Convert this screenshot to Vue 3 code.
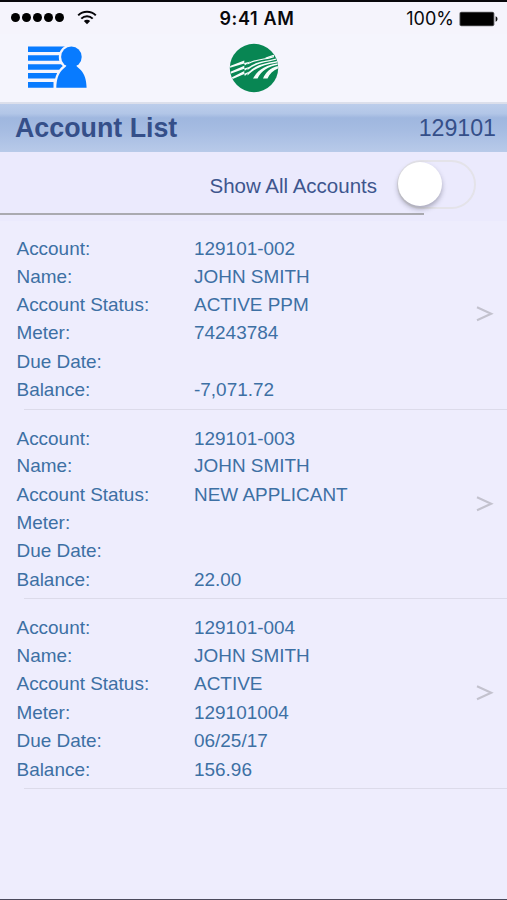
<script setup>
const labels = ['Account:', 'Name:', 'Account Status:', 'Meter:', 'Due Date:', 'Balance:']
const accounts = [
  ['129101-002', 'JOHN SMITH', 'ACTIVE PPM', '74243784', '', '-7,071.72'],
  ['129101-003', 'JOHN SMITH', 'NEW APPLICANT', '', '', '22.00'],
  ['129101-004', 'JOHN SMITH', 'ACTIVE', '129101004', '06/25/17', '156.96'],
]
</script>

<template>
  <div class="screen">
    <header class="status">
      <div class="signal">
        <i v-for="n in 5" :key="n" class="dot"></i>
        <svg class="wifi" width="20" height="15" viewBox="0 0 20 15" fill="none" stroke="#050508" stroke-width="2">
          <path d="M1.2 5.400C6 .6 14 .6 18.800 5.400M4.300 8.600c3.200-3.200 8.200-3.200 11.400 0" />
          <path d="M6.800 11.100c1.800-1.700 4.600-1.700 6.400 0L10 14.300z" fill="#050508" stroke="none" />
        </svg>
      </div>
      <div class="time">9:41 AM</div>
      <div class="power">
        <span>100%</span>
        <svg width="39" height="16" viewBox="0 0 39 16">
          <rect x=".4" y=".7" width="35" height="14.600" rx="2" fill="#68686c" />
          <rect x="1.300" y="1.600" width="33.200" height="12.800" rx="1" fill="#000" />
          <path d="M36.600 5.300c2.500.7 2.500 4.700 0 5.400z" fill="#111" />
        </svg>
      </div>
    </header>

    <nav class="nav">
      <svg class="accounts-icon" width="61" height="45" viewBox="0 0 61 45">
        <g fill="#087bff">
          <path d="M1 1.400h38v5.500H1zM1 10.300h32v5.500H1zM1 19.200h37v5.500H1zM1 28.100h31v5.500H1zM1 37h25.500v5.800H1z" />
          <g stroke="#f6f6fd" stroke-width="4.600">
            <path d="M29.300 42.800c.2-8 2-13.500 5.300-17.300 2-2.300 4-3.500 5.500-5.500h8.600c1.500 2 3.500 3.200 5.500 5.500 3.300 3.800 5.200 9.300 5.400 17.300z" />
            <circle cx="44.400" cy="11.900" r="10.300" />
          </g>
          <path d="M29.300 42.800c.2-8 2-13.500 5.300-17.300 2-2.300 4-3.500 5.500-5.500h8.600c1.500 2 3.500 3.200 5.500 5.500 3.300 3.800 5.200 9.300 5.400 17.300z" />
          <circle cx="44.400" cy="11.900" r="10.300" />
        </g>
      </svg>
      <svg class="brand" width="50" height="50" viewBox="0 0 50 50">
        <defs><clipPath id="disc"><circle cx="25" cy="25" r="24" /></clipPath></defs>
        <circle cx="25" cy="25" r="24.200" fill="#088653" />
        <g clip-path="url(#disc)" fill="#f6fcfa">
          <path d="M1 22.900L15.300 17.400v2.700l6.200-1.500-5.700 3.800-.5-2L1 24.700z" />
          <path d="M1.500 28.700L15.300 22.700v2.700l6.200-2-5.700 4.300-.5-2L1.500 30.700z" />
          <path d="M2.500 34.500L15.300 28v2.700l6.200-2.700-5.700 5-.5-2L2.500 36.600z" />
          <path d="M18.500 20.300C27 15.500 35 16.500 45 13v1.200c-9 3-17 2.300-26.500 7.200z" />
          <path d="M18.500 25.500C27 17.500 36 19 47 15.500v1.300c-11 3.200-18 2.200-28.500 10.200z" />
          <path d="M18.500 30.500C26 21.500 35 20.700 48 18v1.400c-12 2.400-20 4-29.500 13.100z" />
          <path d="M24 35.600C29 26.500 37 22 49 20.300v1.500c-10 2-16 5.200-20.500 13.800z" />
          <path d="M34 35.600c2.500-6.500 7.500-10.800 15-12.600v2.400c-5 1.800-8.500 5.200-10.500 10.200z" />
          <path d="M36 14.800l8.500-3 1 .9-7 2.500z" />
        </g>
      </svg>
    </nav>

    <div class="heading">
      <h1>Account List</h1>
      <span>129101</span>
    </div>

    <div class="filter">
      <span>Show All Accounts</span>
      <div class="switch"><div class="knob"></div></div>
    </div>

    <main>
      <section v-for="account in accounts" :key="account[0]" class="account">
        <dl>
          <div v-for="(label, i) in labels" :key="label" class="field">
            <dt>{{ label }}</dt>
            <dd>{{ account[i] }}</dd>
          </div>
        </dl>
        <svg class="chevron" width="18" height="18" viewBox="0 0 18 18">
          <path d="M1 2.300L15.200 8.800L1 15.300" fill="none" stroke="#c3c2ce" stroke-width="2.100" />
        </svg>
      </section>
    </main>
  </div>
</template>

<style>
body { background: #eeedfd; }
</style>

<style scoped>
* { box-sizing: border-box; }
.screen {
  width: 507px;
  height: 900px;
  overflow: hidden;
  display: flex;
  flex-direction: column;
  background: #eeedfd;
  border-top: 2px solid #08080c;
  border-bottom: 1px solid #4b4a5c;
  font-family: "Liberation Sans", Arial, sans-serif;
}
.status {
  height: 32px;
  flex: none;
  display: grid;
  grid-template-columns: 1fr auto 1fr;
  align-items: center;
  padding: 0 9px 0 11px;
  background: #f5f4fc;
  color: #08080b;
  font: 18px/32px Inter, sans-serif;
}
.signal { display: flex; align-items: center; gap: 2.100px; padding-bottom: 2px; }
.dot { width: 9px; height: 9px; border-radius: 50%; background: #000; }
.wifi { margin-left: 11px; }
.time { font-weight: 600; padding: 1px 0 0 5px; letter-spacing: .65px; }
.power { display: flex; justify-content: flex-end; align-items: center; gap: 5px; }
.power span { padding-top: 1px; }
.nav {
  height: 68px;
  flex: none;
  display: grid;
  grid-template-columns: 202px 1fr;
  align-items: start;
  padding: 9px 0 0 27px;
  background: #f5f5fd;
}
.accounts-icon { margin-top: 2px; }
.heading {
  height: 50px;
  flex: none;
  display: flex;
  align-items: center;
  justify-content: space-between;
  padding: 0 11px 0 15px;
  border-top: 2px solid #dcdfeb;
  background: linear-gradient(#bccdeb 0, #b2c6e7 20%, #9fb7df 29%, #a6bce2 55%, #b8cae9 100%);
  color: #354f89;
}
h1 { margin: 0; font-size: 26.800px; line-height: 30px; font-weight: 700; }
.heading span { font-size: 23.200px; }
.filter {
  height: 69px;
  flex: none;
  display: flex;
  align-items: center;
  justify-content: flex-end;
  gap: 20px;
  padding: 0 31px 4px 0;
  background: linear-gradient(#aaaab0, #aaaab0) 0 61px / 424px 2px no-repeat, #ebeafd;
  color: #3e568e;
  font-size: 20.500px;
}
.filter span { padding-top: 2px; }
.switch {
  width: 79px;
  height: 49px;
  padding: 2px;
  border: 2px solid #e4e3e9;
  border-radius: 25px;
}
.knob {
  width: 44px;
  height: 44px;
  margin-left: -3px;
  margin-top: -2px;
  border-radius: 50%;
  background: #fff;
  box-shadow: 0 3px 5px rgba(40, 40, 60, .35);
}
main { padding-top: 14px; }
.account {
  height: 189.700px;
  display: flex;
  align-items: flex-start;
  justify-content: space-between;
  padding: 0 13px 0 16.500px;
  background: linear-gradient(#dcdbea, #dcdbea) 24px 173.500px / 483px 1.300px no-repeat;
}
dl { margin: 0; }
.field {
  height: 28.400px;
  display: grid;
  grid-template-columns: 177.500px auto;
  line-height: 28px;
  font-size: 18.950px;
  color: #3d70a4;
}
.field:first-child { height: 27.600px; }
.field:nth-child(2) { line-height: 27.400px; }
dt, dd { margin: 0; white-space: nowrap; }
.chevron { margin-top: 70px; }
</style>
